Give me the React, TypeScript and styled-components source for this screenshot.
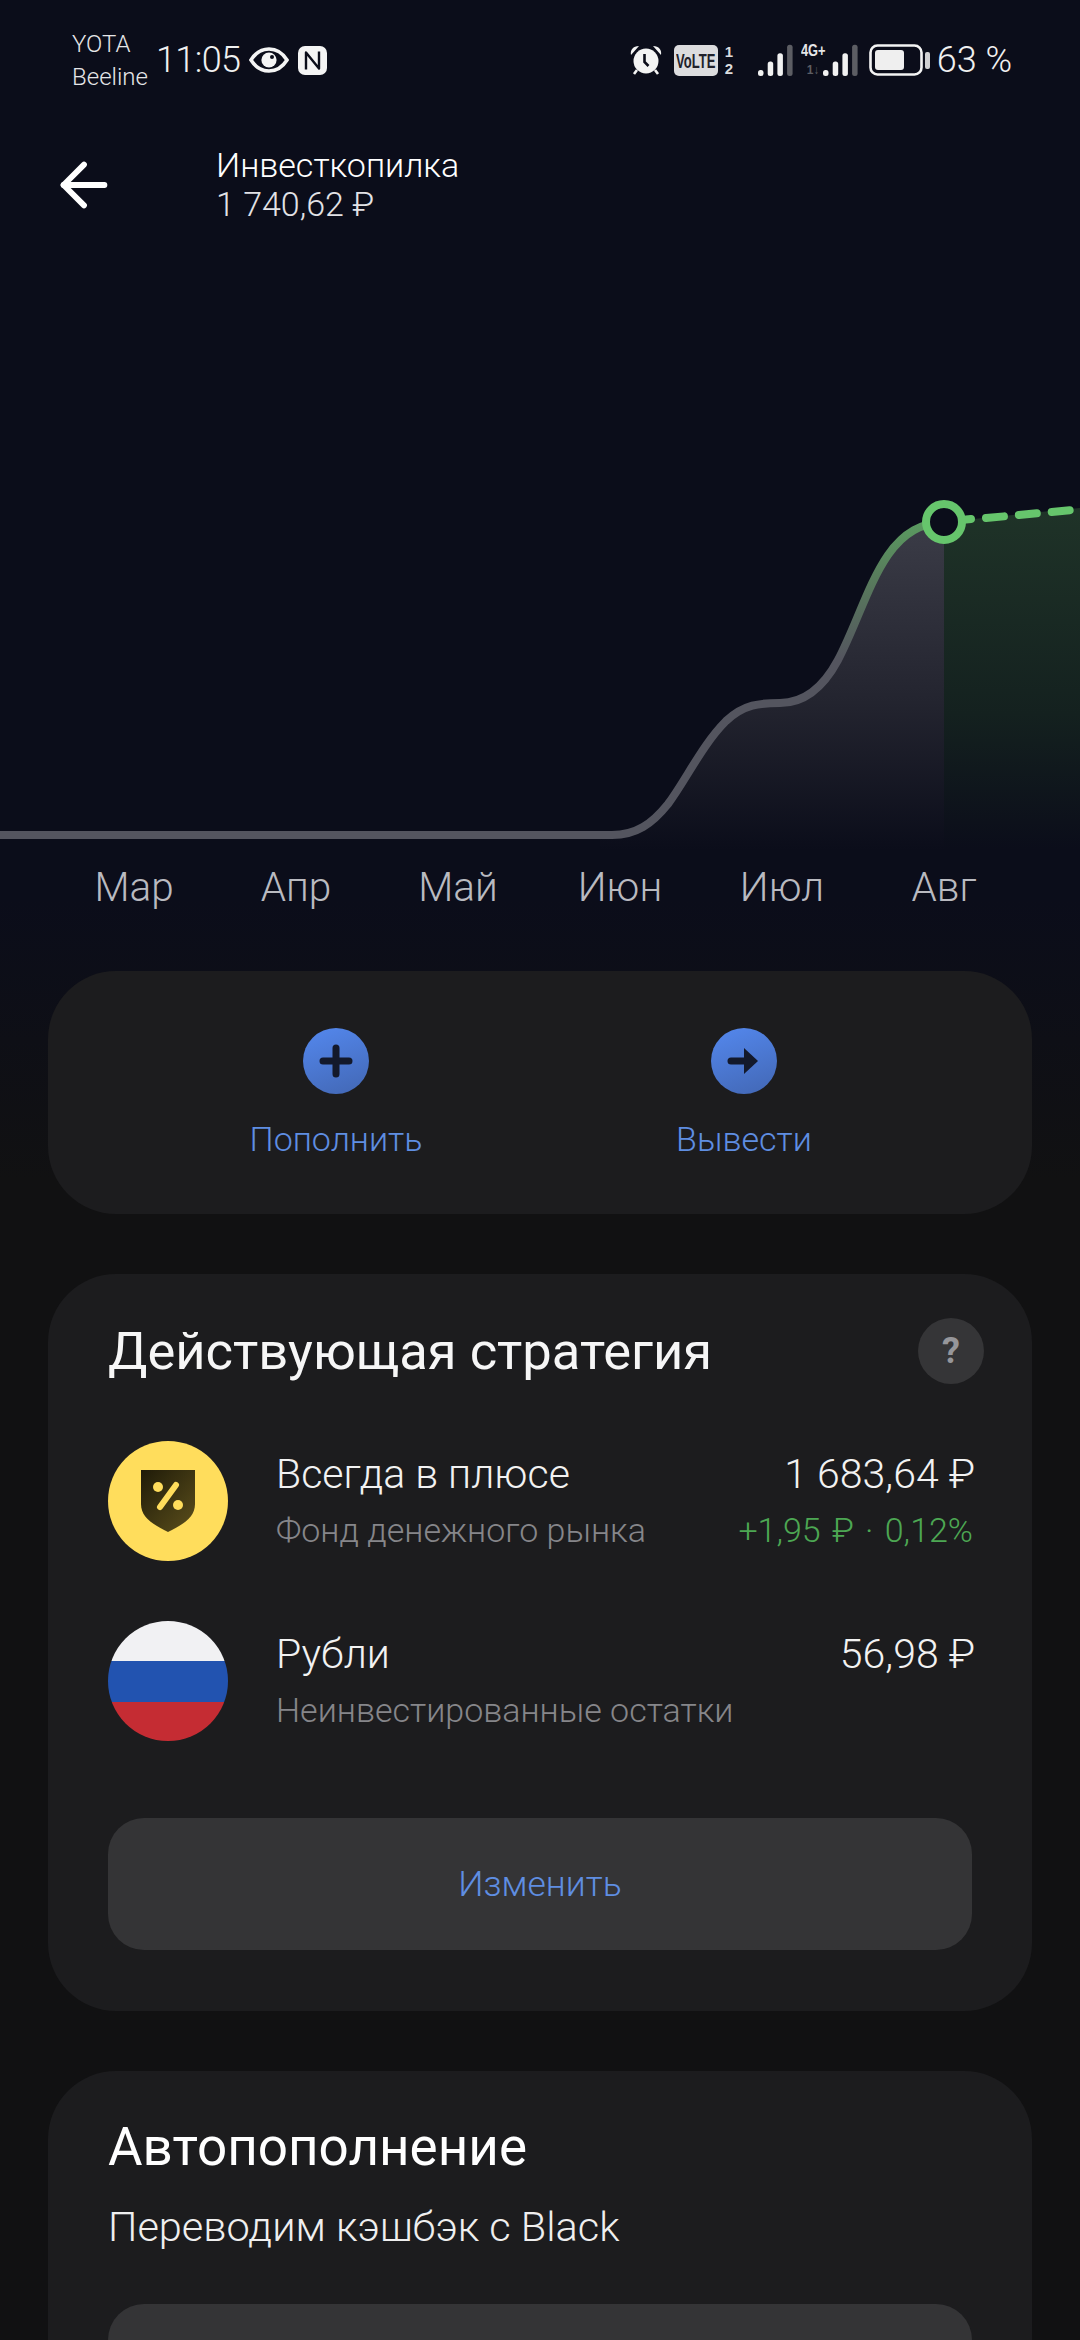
import React from 'react'
import styled, { createGlobalStyle } from 'styled-components'
import { ArrowLeft } from 'lucide-react'

const GlobalStyle = createGlobalStyle`
  html, body {
    margin: 0;
    padding: 0;
    background: #111112;
    font-family: Roboto, "Liberation Sans", sans-serif;
  }
`

const Page = styled.div`
  width: 1080px;
  height: 2340px;
  overflow: hidden;
  color: #fff;
  font-weight: 300;
  background: linear-gradient(180deg, #0b0d1a 0, #0b0d1a 900px, #111112 1180px);
`

const StatusBar = styled.div`
  height: 120px;
  box-sizing: border-box;
  padding: 26px 68px 0 72px;
  display: flex;
  align-items: flex-start;
`

const Carriers = styled.div`
  width: 84px;
  font-size: 24px;
  line-height: 33px;
  color: #e6e6e8;
  font-weight: 300;
  margin-top: 2px;
`

const Clock = styled.div`
  font-size: 36px;
  line-height: 68px;
  height: 68px;
  color: #f0f0f0;
  margin-right: 9px;
  letter-spacing: -0.6px;
`

const StatusIcons = styled.div`
  height: 68px;
  display: flex;
  align-items: center;
  gap: 9px;
`

const StatusRight = styled.div`
  margin-left: auto;
  height: 68px;
  display: flex;
  align-items: center;
`

const VolteBox = styled.div`
  width: 44px;
  height: 31px;
  border-radius: 5px;
  background: #dcdcde;
  margin-left: 12px;
  display: flex;
  align-items: center;
  justify-content: center;
  overflow: hidden;
`

const VolteText = styled.span`
  font: 700 21px/31px "Liberation Sans", sans-serif;
  color: #20212a;
  transform: scaleX(0.62);
`

const SimNumbers = styled.div`
  width: 8px;
  margin: 0 25px 0 7px;
  font: 700 15px/17px "Liberation Sans", sans-serif;
  color: #dcdcde;
`

const NetworkStack = styled.div`
  position: relative;
  width: 60px;
  height: 34px;
  margin-left: 7px;
`

const NetworkLabel = styled.span`
  position: absolute;
  left: 0;
  top: 0;
  font: 700 16px/16px "Liberation Sans", sans-serif;
  color: #e6e6e8;
  transform: scaleX(0.8);
  transform-origin: left top;
`

const NetworkSub = styled.span`
  position: absolute;
  left: 6px;
  bottom: 0;
  font: 700 12px/14px "Liberation Sans", sans-serif;
  color: #5c5d63;
`

const BatteryWrap = styled.div`
  margin-left: 8px;
  display: flex;
`

const Percent = styled.div`
  margin-left: 6px;
  font-size: 36px;
  color: #f0f0f0;
  white-space: pre;
`

const Header = styled.div`
  height: 120px;
  display: flex;
  align-items: flex-start;
`

const BackButton = styled.div`
  width: 216px;
  box-sizing: border-box;
  padding: 30px 0 0 49px;
  color: #fff;
  display: flex;
`

const HeaderText = styled.div`
  padding-top: 26px;
  font-size: 34px;
  line-height: 39px;
`

const HeaderAmount = styled.div`
  color: #e2e2e6;
`

const Chart = styled.svg`
  display: block;
  width: 1080px;
  height: 620px;
`

const Months = styled.div`
  height: 54px;
  padding-left: 53px;
  display: grid;
  grid-template-columns: repeat(6, 162px);
  font-size: 40.5px;
  line-height: 54px;
  color: #b9bac0;
  text-align: center;
`

const Card = styled.section`
  margin: 0 48px 60px;
  background: #1c1c1e;
  border-radius: 68px;
`

const ActionsCard = styled(Card)`
  margin-top: 57px;
  height: 243px;
  box-sizing: border-box;
  padding-top: 57px;
  display: grid;
  grid-template-columns: 408px 408px;
  justify-content: center;
`

const Action = styled.div`
  display: flex;
  flex-direction: column;
  align-items: center;
  gap: 25px;
`

const ActionIcon = styled.div`
  width: 66px;
  height: 66px;
  border-radius: 50%;
  background: linear-gradient(160deg, #5488ee, #4267b4);
  display: flex;
  align-items: center;
  justify-content: center;
`

const ActionLabel = styled.div`
  font-size: 34px;
  line-height: 40px;
  color: #5f8ee2;
`

const StrategyCard = styled(Card)`
  height: 737px;
  box-sizing: border-box;
  padding: 44px 60px 0;
`

const TitleRow = styled.div`
  height: 66px;
  display: flex;
  align-items: center;
  justify-content: space-between;
  margin-bottom: 57px;
`

const Title = styled.h2`
  margin: 0;
  font-size: 52.5px;
  font-weight: 400;
  line-height: 66px;
  color: #f6f6f6;
`

const HelpDot = styled.div`
  width: 66px;
  height: 66px;
  margin-right: -12px;
  border-radius: 50%;
  background: #353537;
  color: #96969a;
  font: 700 36px/66px Roboto, sans-serif;
  text-align: center;
`

const Holding = styled.div`
  height: 120px;
  display: flex;
  margin-bottom: 60px;
`

const Avatar = styled.div<{ $kind: 'fund' | 'flag' }>`
  width: 120px;
  height: 120px;
  border-radius: 50%;
  flex: none;
  margin-right: 48px;
  display: flex;
  align-items: center;
  justify-content: center;
  background: ${(p) => (p.$kind === 'fund'
    ? '#ffdd5c'
    : 'linear-gradient(180deg, #f1f1f3 0 40px, #2253b0 40px 81px, #c52c33 81px)')};
`

const HoldingBody = styled.div`
  flex: 1;
  padding-top: 9px;
  margin-right: -3px;
`

const HoldingLine = styled.div`
  display: flex;
  justify-content: space-between;
  font-size: 41px;
  line-height: 48px;
  color: #f2f2f2;
`

const HoldingSub = styled.div`
  margin-top: 12px;
  display: flex;
  justify-content: space-between;
  font-size: 34px;
  line-height: 40px;
  color: #86868a;
`

const Gain = styled.span`
  color: #4da753;
  margin-right: 2px;
  word-spacing: 3px;
`

const GreyButton = styled.div`
  height: 132px;
  border-radius: 36px;
  background: #343436;
  color: #5f8ee2;
  font-size: 35.5px;
  line-height: 132px;
  text-align: center;
`

const ChangeButton = styled(GreyButton)`
  margin-top: 77px;
`

const AutoCard = styled(Card)`
  box-sizing: border-box;
  height: 400px;
  padding: 42px 60px 0;
`

const AutoTitle = styled.h2`
  margin: 0;
  font-size: 53px;
  font-weight: 400;
  line-height: 68px;
  color: #fff;
`

const AutoSub = styled.div`
  margin: 22px 0 53px;
  font-size: 41.5px;
  line-height: 48px;
  color: #efefef;
`

function Bars ({ x, lit }: { x: number, lit: number }): JSX.Element {
  const bars = [0, 1, 2, 3]
  return (
    <>
      {bars.map((i) => {
        const h = 6 + i * 8.4
        return (
          <rect
            key={i}
            x={x + i * 9.7}
            y={33 - h}
            width={5.5}
            height={h}
            rx={2.5}
            fill={i < lit ? '#f2f2f2' : '#5c5d63'}
          />
        )
      })}
    </>
  )
}

function Eye (): JSX.Element {
  return (
    <svg width="40" height="28" viewBox="0 0 40 28">
      <path d="M2 14C7 6 13 3 20 3s13 3 18 11c-5 8-11 11-18 11S7 22 2 14Z" fill="none" stroke="#f4f4f4" strokeWidth="3.6" />
      <circle cx="20" cy="14" r="7.6" fill="#f4f4f4" />
      <circle cx="23" cy="11" r="2" fill="#0b0d1a" />
    </svg>
  )
}

function Nfc (): JSX.Element {
  return (
    <svg width="29" height="29" viewBox="0 0 29 29">
      <rect width="29" height="29" rx="7" fill="#f4f4f4" />
      <path d="M8 23.5V6.5L21 22.5V5.5" fill="none" stroke="#0b0d1a" strokeWidth="2.4" strokeLinejoin="round" />
    </svg>
  )
}

function Alarm (): JSX.Element {
  return (
    <svg width="32" height="30" viewBox="0 0 32 30">
      <circle cx="16" cy="16" r="12.5" fill="#f4f4f4" />
      <path d="M1 10C0 5 3 1 9 1ZM31 10C32 5 29 1 23 1Z" fill="#f4f4f4" />
      <path d="M7 25l-3 4M25 25l3 4" stroke="#f4f4f4" strokeWidth="2.6" />
      <path d="M14.5 9v8l4 4" fill="none" stroke="#0b0d1a" strokeWidth="2.6" />
    </svg>
  )
}

function Battery (): JSX.Element {
  return (
    <svg width="62" height="32" viewBox="0 0 62 32">
      <rect x="1.5" y="1.5" width="51" height="29" rx="7" fill="none" stroke="#f4f4f4" strokeWidth="2.6" />
      <rect x="6" y="6" width="29" height="20" rx="3" fill="#efefef" />
      <rect x="56" y="8" width="5" height="17" rx="2" fill="#d0d0d2" />
    </svg>
  )
}

function ChartDrawing (): JSX.Element {
  // page coords minus the 240px the chart starts at
  const curve = 'M0 595H612C636 595 652 584 668 564C686 540 702 505 726 481C744 464 760 463 780 463C806 463 824 446 838 420C856 386 868 344 888 315C904 292 922 283 944 282'
  return (
    <Chart viewBox="0 0 1080 620">
      <defs>
        <linearGradient id="greyFill" x1="0" y1="0" x2="0" y2="1">
          <stop offset="0" stopColor="#3b3c47" />
          <stop offset="0.55" stopColor="#23242f" />
          <stop offset="1" stopColor="#0b0d1a" />
        </linearGradient>
        <linearGradient id="greenFill" x1="0" y1="0" x2="0" y2="1">
          <stop offset="0" stopColor="#1f3328" />
          <stop offset="0.6" stopColor="#14211f" />
          <stop offset="1" stopColor="#0b0d1a" />
        </linearGradient>
        <linearGradient id="lineFade" gradientUnits="userSpaceOnUse" x1="0" y1="282" x2="0" y2="420">
          <stop offset="0" stopColor="#5a9a60" />
          <stop offset="0.4" stopColor="#587c5c" />
          <stop offset="1" stopColor="#54555f" />
        </linearGradient>
      </defs>
      <path d={`${curve}V610H600V595Z`} fill="url(#greyFill)" />
      <path d="M944 282L1080 268V610H944Z" fill="url(#greenFill)" />
      <path d={curve} fill="none" stroke="url(#lineFade)" strokeWidth="8" />
      <path d="M966 279.5L971 279" fill="none" stroke="#66c56c" strokeWidth="8" strokeLinecap="round" />
      <path d="M986 278L1080 269.4" fill="none" stroke="#66c56c" strokeWidth="8" strokeLinecap="round" strokeDasharray="18 15" />
      <circle cx="944" cy="282" r="18" fill="#0b0d1a" stroke="#66c56c" strokeWidth="8" />
    </Chart>
  )
}

const months = ['Мар', 'Апр', 'Май', 'Июн', 'Июл', 'Авг']

export default function App (): JSX.Element {
  return (
    <Page>
      <GlobalStyle />
      <StatusBar>
        <Carriers>YOTA<br />Beeline</Carriers>
        <Clock>11:05</Clock>
        <StatusIcons>
          <Eye />
          <Nfc />
        </StatusIcons>
        <StatusRight>
          <Alarm />
          <VolteBox><VolteText>VoLTE</VolteText></VolteBox>
          <SimNumbers>1<br />2</SimNumbers>
          <svg width="36" height="34" viewBox="0 0 36 34"><Bars x={0} lit={3} /></svg>
          <NetworkStack>
            <NetworkLabel>4G+</NetworkLabel>
            <NetworkSub>1↓</NetworkSub>
            <svg width="60" height="34" viewBox="0 0 60 34"><Bars x={22} lit={3} /></svg>
          </NetworkStack>
          <BatteryWrap><Battery /></BatteryWrap>
          <Percent>63 %</Percent>
        </StatusRight>
      </StatusBar>
      <Header>
        <BackButton><ArrowLeft size={70} strokeWidth={2} /></BackButton>
        <HeaderText>
          Инвесткопилка
          <HeaderAmount>1 740,62 ₽</HeaderAmount>
        </HeaderText>
      </Header>
      <ChartDrawing />
      <Months>{months.map((m) => <div key={m}>{m}</div>)}</Months>
      <ActionsCard>
        <Action>
          <ActionIcon>
            <svg width="36" height="36" viewBox="0 0 36 36">
              <path d="M18 5v26M5 18h26" stroke="#13192b" strokeWidth="7" strokeLinecap="round" />
            </svg>
          </ActionIcon>
          <ActionLabel>Пополнить</ActionLabel>
        </Action>
        <Action>
          <ActionIcon>
            <svg width="36" height="36" viewBox="0 0 36 36">
              <path d="M5 18h14" stroke="#13192b" strokeWidth="7" strokeLinecap="round" />
              <path d="M18 5l14 13-14 13Z" fill="#13192b" />
            </svg>
          </ActionIcon>
          <ActionLabel>Вывести</ActionLabel>
        </Action>
      </ActionsCard>
      <StrategyCard>
        <TitleRow>
          <Title>Действующая стратегия</Title>
          <HelpDot>?</HelpDot>
        </TitleRow>
        <Holding>
          <Avatar $kind="fund">
            <svg width="54" height="62" viewBox="0 0 54 62">
              <defs>
                <linearGradient id="shield" x1="0" y1="0" x2="1" y2="1">
                  <stop offset="0" stopColor="#1f1b08" />
                  <stop offset="1" stopColor="#5c4f1c" />
                </linearGradient>
              </defs>
              <path d="M0 0h54v34c0 13-11 20-27 28C11 54 0 47 0 34Z" fill="url(#shield)" />
              <circle cx="17" cy="17" r="5" fill="#ffdd5c" />
              <circle cx="37" cy="35" r="5" fill="#ffdd5c" />
              <path d="M35 15L19 37" stroke="#ffdd5c" strokeWidth="6" strokeLinecap="round" />
            </svg>
          </Avatar>
          <HoldingBody>
            <HoldingLine><span>Всегда в плюсе</span><span>1 683,64 ₽</span></HoldingLine>
            <HoldingSub><span>Фонд денежного рынка</span><Gain>+1,95 ₽ · 0,12%</Gain></HoldingSub>
          </HoldingBody>
        </Holding>
        <Holding>
          <Avatar $kind="flag" />
          <HoldingBody>
            <HoldingLine><span>Рубли</span><span>56,98 ₽</span></HoldingLine>
            <HoldingSub><span>Неинвестированные остатки</span></HoldingSub>
          </HoldingBody>
        </Holding>
        <ChangeButton>Изменить</ChangeButton>
      </StrategyCard>
      <AutoCard>
        <AutoTitle>Автопополнение</AutoTitle>
        <AutoSub>Переводим кэшбэк с Black</AutoSub>
        <GreyButton />
      </AutoCard>
    </Page>
  )
}
